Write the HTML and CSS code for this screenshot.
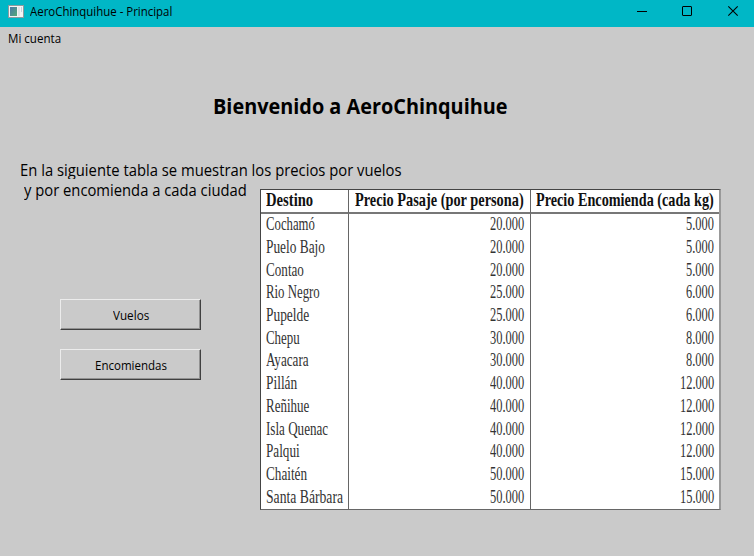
FILE: index.html
```html
<!DOCTYPE html>
<html lang="es">
<head>
<meta charset="utf-8">
<title>AeroChinquihue - Principal</title>
<link rel="stylesheet" href="styles.css">
</head>
<body>
<header class="titlebar">
  <svg class="app-icon" width="16" height="13" viewBox="0 0 16 13" shape-rendering="crispEdges">
    <defs>
      <linearGradient id="pane" x1="0" y1="0" x2="1" y2="1">
        <stop offset="0" stop-color="#4778a8"/>
        <stop offset="1" stop-color="#55a878"/>
      </linearGradient>
    </defs>
    <rect width="16" height="13" fill="#8d9ba0"/>
    <rect x="1" y="1" width="14" height="11" fill="#f4f4f4"/>
    <rect x="2" y="2" width="7" height="9" fill="url(#pane)"/>
    <rect x="10" y="2" width="2" height="9" fill="#dfe5e8"/>
    <rect x="13" y="2" width="1" height="5" fill="#c3d3dc"/>
  </svg>
  <span class="window-title" data-width="142">AeroChinquihue - Principal</span>
  <svg class="controls" width="120" height="27" viewBox="0 0 120 27" fill="none" stroke="#000">
    <path d="M3 11.5h10"/>
    <rect x="48.5" y="6.5" width="9" height="9" rx="0.5"/>
    <path d="M94.300 6.300l9.400 9.400M103.700 6.300l-9.400 9.400" stroke-width="1.100"/>
  </svg>
</header>
<nav class="menubar"><span data-width="53">Mi cuenta</span></nav>
<main>
  <h1><span data-width="295">Bienvenido a AeroChinquihue</span></h1>
  <p class="line first"><span data-width="382">En la siguiente tabla se muestran los precios por vuelos</span></p>
  <div class="content">
    <div class="side">
      <p class="line second"><span data-width="223">y por encomienda a cada ciudad</span></p>
      <div class="actions">
        <button><span data-width="36">Vuelos</span></button>
        <button><span data-width="72">Encomiendas</span></button>
      </div>
    </div>
    <table class="prices">
      <colgroup><col class="city"><col class="fare"><col class="parcel"></colgroup>
      <thead><tr><th><span data-width="47">Destino</span></th><th><span data-width="169">Precio Pasaje (por persona)</span></th><th><span data-width="178">Precio Encomienda (cada kg)</span></th></tr></thead>
      <tbody>
        <tr><td><span data-width="49">Cochamó</span></td><td><span data-width="34">20.000</span></td><td><span data-width="28">5.000</span></td></tr>
        <tr><td><span data-width="59">Puelo Bajo</span></td><td><span data-width="34">20.000</span></td><td><span data-width="28">5.000</span></td></tr>
        <tr><td><span data-width="38">Contao</span></td><td><span data-width="34">20.000</span></td><td><span data-width="28">5.000</span></td></tr>
        <tr><td><span data-width="54">Rio Negro</span></td><td><span data-width="34">25.000</span></td><td><span data-width="28">6.000</span></td></tr>
        <tr><td><span data-width="43">Pupelde</span></td><td><span data-width="34">25.000</span></td><td><span data-width="28">6.000</span></td></tr>
        <tr><td><span data-width="34">Chepu</span></td><td><span data-width="34">30.000</span></td><td><span data-width="28">8.000</span></td></tr>
        <tr><td><span data-width="43">Ayacara</span></td><td><span data-width="34">30.000</span></td><td><span data-width="28">8.000</span></td></tr>
        <tr><td><span data-width="31">Pillán</span></td><td><span data-width="34">40.000</span></td><td><span data-width="34">12.000</span></td></tr>
        <tr><td><span data-width="43">Reñihue</span></td><td><span data-width="34">40.000</span></td><td><span data-width="34">12.000</span></td></tr>
        <tr><td><span data-width="62">Isla Quenac</span></td><td><span data-width="34">40.000</span></td><td><span data-width="34">12.000</span></td></tr>
        <tr><td><span data-width="34">Palqui</span></td><td><span data-width="34">40.000</span></td><td><span data-width="34">12.000</span></td></tr>
        <tr><td><span data-width="41">Chaitén</span></td><td><span data-width="34">50.000</span></td><td><span data-width="34">15.000</span></td></tr>
        <tr><td><span data-width="77">Santa Bárbara</span></td><td><span data-width="34">50.000</span></td><td><span data-width="34">15.000</span></td></tr>
      </tbody>
    </table>
  </div>
</main>
<script src="fit.js"></script>
</body>
</html>
```
FILE: styles.css
```css
* { box-sizing: border-box; }
body {
  margin: 0;
  height: 556px;
  overflow: hidden;
  background: #cacaca;
  color: #000;
  font: 12px/16px "Open Sans", "Noto Sans", sans-serif;
}
[data-width] {
  display: inline-block;
  white-space: nowrap;
}
.titlebar {
  display: flex;
  height: 27px;
  padding-left: 8px;
  background: #00b7c6;
}
.app-icon { margin-top: 5px; }
.window-title { margin: 4px 0 0 6px; }
.controls { margin-left: auto; }
.menubar { height: 24px; padding: 4px 8px; }
h1 {
  margin: 40px 0 0 213px;
  height: 30px;
  font-size: 21px;
  line-height: 30px;
  font-weight: 700;
}
.line { margin: 0; font-size: 15.5px; line-height: 22px; }
.first { margin: 38px 0 0 20px; height: 20px; }
.content { display: flex; }
.side { width: 260px; }
/* The second label's background overlaps the descenders of the first. */
.second {
  position: relative;
  z-index: 1;
  width: 248px;
  height: 22px;
  padding-left: 24px;
  background: #cacaca;
}
.actions {
  display: flex;
  flex-direction: column;
  gap: 19px;
  margin: 98px 0 0 60px;
}
button {
  width: 141px;
  height: 31px;
  padding: 2px 0 0;
  color: #000;
  font: inherit;
  background: #cacaca;
  border: 1px solid;
  border-color: #ececec #404040 #404040 #ececec;
  box-shadow: inset -1px -1px #929292;
}
.prices {
  width: 461px;
  height: 321px;
  margin-top: 10px;
  table-layout: fixed;
  border-spacing: 0;
  background: #fff;
  border: 1px solid #444;
  border-right: 2px solid #999;
  border-bottom-color: #666;
  color: #333;
  font: 19px/20px "Liberation Serif", serif;
}
.city { width: 88px; }
.fare { width: 182px; }
.parcel { width: 188px; }
th, td { padding: 0 6px 0 5px; text-align: right; border-right: 1px solid #666; }
th { height: 24px; padding-bottom: 2px; color: #111; border-bottom: 2px solid #777; }
td { height: 22.690px; padding-bottom: 2px; }
th:first-child, td:first-child { text-align: left; }
th:last-child, td:last-child { border-right: 0; }
td:last-child { padding-right: 5px; }
.prices span { display: block; }
.prices td:not(:first-child) span,
.prices th:not(:first-child) span { margin-left: auto; }
```
FILE: fit.js
```js
// Condense each label horizontally to its nominal width.
document.querySelectorAll('[data-width]').forEach(function (el) {
  var target = Number(el.dataset.width);
  el.style.width = 'max-content';
  var natural = el.offsetWidth;
  el.style.width = target + 'px';
  el.style.textAlign = 'left';
  el.style.transformOrigin = 'left center';
  el.style.transform = 'scaleX(' + target / natural + ')';
});
```
